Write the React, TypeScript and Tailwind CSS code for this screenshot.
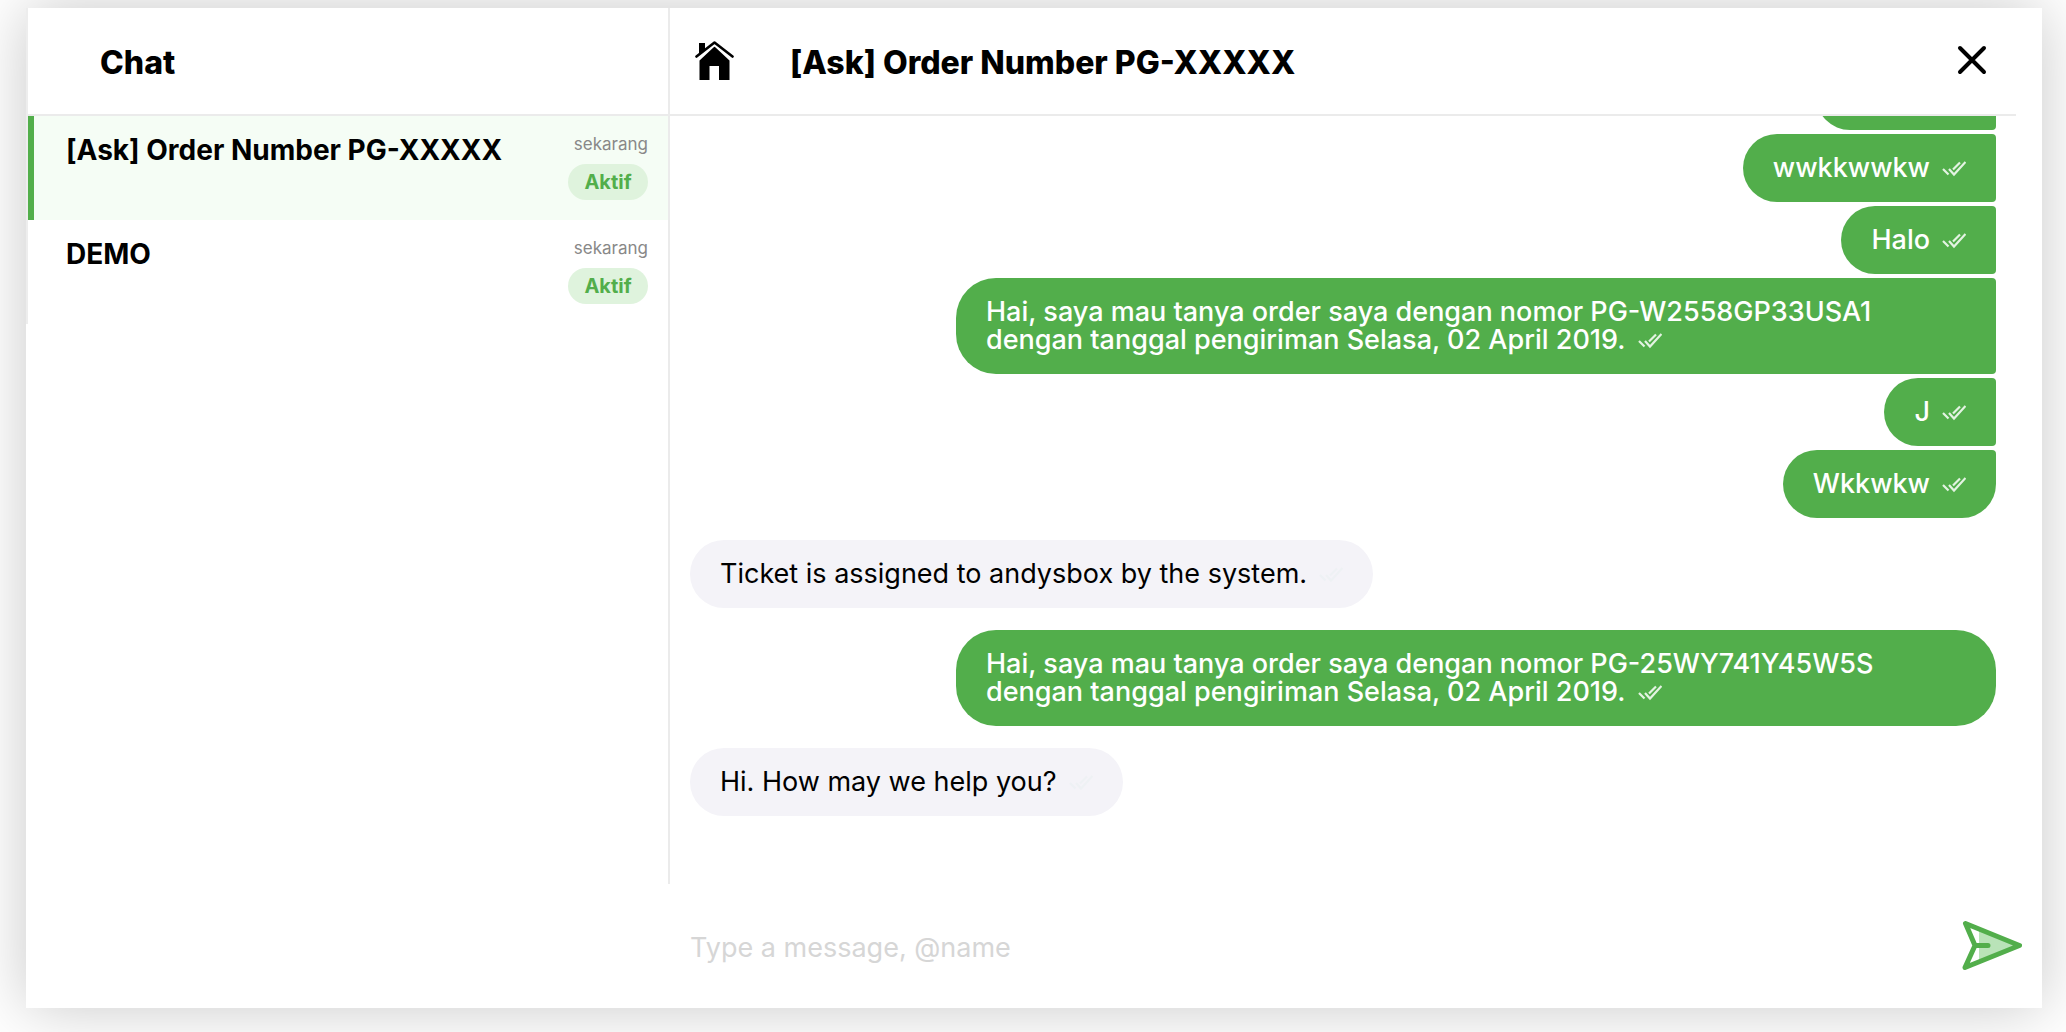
type Message = { text: string; mine: boolean; wide?: boolean; shape: string };

const groups: Message[][] = [
  [
    { text: "", mine: true, shape: "rounded-l-[34px] rounded-r-sm min-w-[180px]" },
    { text: "wwkkwwkw", mine: true, shape: "rounded-l-[34px] rounded-r-sm" },
    { text: "Halo", mine: true, shape: "rounded-l-[34px] rounded-r-sm" },
    {
      text: "Hai, saya mau tanya order saya dengan nomor PG-W2558GP33USA1 dengan tanggal pengiriman Selasa, 02 April 2019.",
      mine: true,
      wide: true,
      shape: "rounded-l-[40px] rounded-r",
    },
    { text: "J", mine: true, shape: "rounded-l-[34px] rounded-r-sm" },
    { text: "Wkkwkw", mine: true, shape: "rounded-l-[34px] rounded-tr-sm rounded-br-[34px]" },
  ],
  [{ text: "Ticket is assigned to andysbox by the system.", mine: false, shape: "rounded-[34px]" }],
  [
    {
      text: "Hai, saya mau tanya order saya dengan nomor PG-25WY741Y45W5S dengan tanggal pengiriman Selasa, 02 April 2019.",
      mine: true,
      wide: true,
      shape: "rounded-[40px]",
    },
  ],
  [{ text: "Hi. How may we help you?", mine: false, shape: "rounded-[34px]" }],
];

const chats = [
  { title: "[Ask] Order Number PG-XXXXX", active: true },
  { title: "DEMO", active: false },
];

function Ticks({ mine }: { mine: boolean }) {
  return (
    <svg
      viewBox="0 0 24 16"
      className={`ml-3 inline-block h-4 w-6 align-baseline ${mine ? "text-[#e3f3e2]" : "text-[#eef1f4]"}`}
      fill="none"
      stroke="currentColor"
      strokeWidth="2.2"
      aria-hidden="true"
    >
      <path d="M1 8l5.500 5.500M7 8l5 5.500L23.500 1M11 8.500L18 1.500" />
    </svg>
  );
}

function HomeIcon() {
  return (
    <svg viewBox="0 0 40 40" className="h-10 w-10" aria-hidden="true">
      <path d="M5.500 19.500L20.500 5.500l15 14V39H25V25h-9.500v14h-10z" fill="#000" />
      <path d="M2.500 15.800L20.500 1.500l18 14.300" fill="none" stroke="#fff" strokeWidth="6" />
      <path d="M5 2h6v7l-6 5z" fill="#000" />
      <path d="M2.500 15.500L20.500 1.500l18 14" fill="none" stroke="#000" strokeWidth="2.600" strokeLinecap="round" strokeLinejoin="round" />
    </svg>
  );
}

function SendIcon() {
  return (
    <svg viewBox="0 0 60 50" className="h-[50px] w-[60px]" aria-hidden="true">
      <path d="M17 8l40 16.500L17 41z" fill="#b9e3b8" />
      <path
        d="M3.500 2.500l54 22L3 46.500l10-22zM13 24.500h13"
        fill="none"
        stroke="#52ae4b"
        strokeWidth="5"
        strokeLinecap="round"
        strokeLinejoin="round"
        className="overflow-visible"
      />
    </svg>
  );
}

export default function App() {
  return (
    <div className="h-screen overflow-hidden bg-white pt-2 pr-6 pb-6 pl-[26px] font-[Inter,'Liberation_Sans',sans-serif] text-black">
      <div className="flex h-full bg-white shadow-[0_0_60px_rgba(0,0,0,0.22)]">
        <aside className="w-[642px] shrink-0">
          <div className="border-l-2 border-[#ededed]">
            <header className="flex h-[108px] items-center border-b-2 border-[#ebebeb] pt-1 pl-[72px]">
              <h1 className="text-[32px] leading-8 font-extrabold">Chat</h1>
            </header>
            <ul>
              {chats.map((chat) => (
                <li key={chat.title}>
                  <button
                    type="button"
                    className={`flex h-[104px] w-full items-start justify-between border-l-[6px] pt-5 pr-5 pl-8 text-left ${
                      chat.active ? "border-[#52ae4b] bg-[#f5fdf5]" : "border-transparent"
                    }`}
                  >
                    <span className="text-[28px] leading-7 font-bold">{chat.title}</span>
                    <span className="flex flex-col items-end">
                      <span className="text-[17px] leading-4 text-[#888]">sekarang</span>
                      <span className="mt-3 flex h-9 w-20 items-center justify-center rounded-full bg-[#dff3dd] text-xl font-bold text-[#52ae4b]">
                        Aktif
                      </span>
                    </span>
                  </button>
                </li>
              ))}
            </ul>
          </div>
        </aside>

        <main className="flex min-w-0 flex-1 flex-col">
          <div className="flex min-h-0 flex-1 flex-col border-l-2 border-[#ebebeb]">
            <header className="mr-[26px] flex h-[108px] shrink-0 items-center border-b-2 border-[#ebebeb] pr-7 pl-6">
              <button type="button" aria-label="Home">
                <HomeIcon />
              </button>
              <h2 className="ml-14 flex-1 pt-1 text-[32px] leading-8 font-extrabold">[Ask] Order Number PG-XXXXX</h2>
              <button type="button" aria-label="Close">
                <svg viewBox="0 0 32 32" className="h-8 w-8" fill="none" stroke="#000" strokeWidth="4" strokeLinecap="round">
                  <path d="M4 3l24 24M28 3L4 27" />
                </svg>
              </button>
            </header>
            <div className="flex min-h-0 flex-1 flex-col justify-end gap-[22px] overflow-hidden pr-[46px] pb-[68px] pl-5">
              {groups.map((group, g) => (
                <div key={g} className="flex flex-col gap-1">
                  {group.map((m, i) => (
                    <p
                      key={i}
                      className={`min-h-[68px] px-[30px] py-5 text-[27px] leading-7 ${m.wide ? "w-[1040px] max-w-full" : ""} ${
                        m.mine ? "self-end bg-[#52ae4b] font-medium text-white" : "self-start bg-[#f4f3f8]"
                      } ${m.shape}`}
                    >
                      {m.text}
                      {m.text && <Ticks mine={m.mine} />}
                    </p>
                  ))}
                </div>
              ))}
            </div>
          </div>
          <form className="flex h-[124px] shrink-0 items-center pr-5 pl-[22px]" onSubmit={(e) => e.preventDefault()}>
            <input
              type="text"
              aria-label="Message"
              placeholder="Type a message, @name"
              className="min-w-0 flex-1 pt-1 text-[27px] leading-8 outline-none placeholder:text-[#d6d6d6]"
            />
            <button type="submit" aria-label="Send">
              <SendIcon />
            </button>
          </form>
        </main>
      </div>
    </div>
  );
}
